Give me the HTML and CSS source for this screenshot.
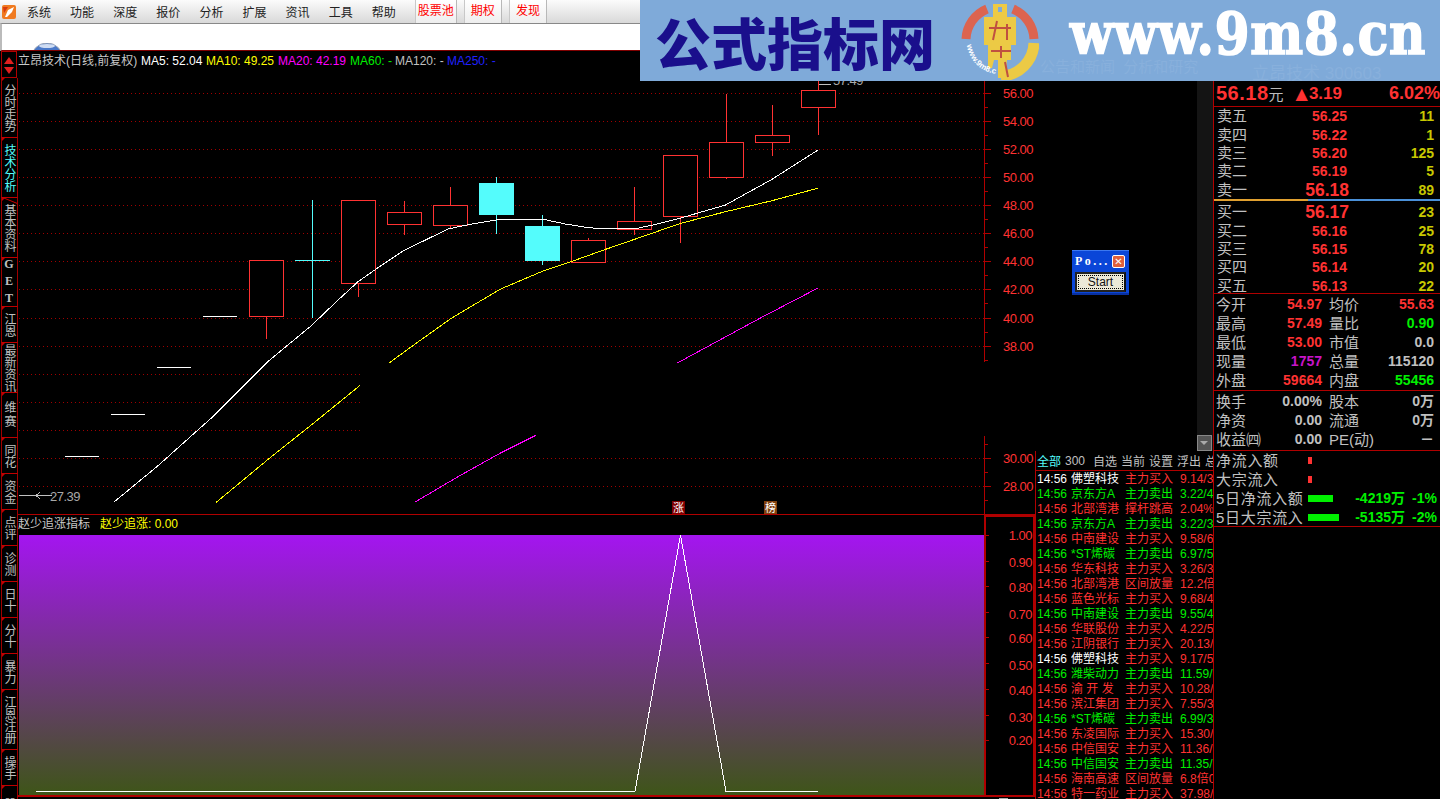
FILE: index.html
```html
<!DOCTYPE html>
<html lang="zh-CN">
<head>
  <meta charset="UTF-8" />
  <title>立昂技术</title>
  <link rel="stylesheet" href="styles.css">
</head>
<body>
  <div class="menubar">
    <svg class="app-logo" width="16" height="16" viewBox="0 0 16 16">
      <rect x="1" y="1" width="14" height="14" rx="2" fill="#f07a20"/>
      <path d="M4 13 L7 6 L13 3 L11 8 L6 13 Z" fill="#fff"/>
      <path d="M2 3 L7 3 L3 9 Z" fill="#d83a10"/>
    </svg>
    <span class="menu-item">系统</span>
    <span class="menu-item">功能</span>
    <span class="menu-item">深度</span>
    <span class="menu-item">报价</span>
    <span class="menu-item">分析</span>
    <span class="menu-item">扩展</span>
    <span class="menu-item">资讯</span>
    <span class="menu-item">工具</span>
    <span class="menu-item">帮助</span>
    <span class="menu-hot menu-hot-first">股票池</span>
    <span class="menu-hot">期权</span>
    <span class="menu-hot">发现</span>
  </div>

  <div class="toolbar">
    <svg width="34" height="7" viewBox="0 0 34 7">
      <circle cx="17" cy="16" r="16" fill="#4a78c8" stroke="#9aa4b4"/>
      <ellipse cx="17" cy="3" rx="8" ry="2" fill="#cfdcf2"/>
    </svg>
  </div>

  <div class="workspace">
    <div class="sidetabs">
      <div class="tab-arrows"><span class="arrow-up"></span><span class="arrow-down"></span></div>
      <div class="tab tab-long">分时走势</div>
      <div class="tab tab-long tab-active">技术分析</div>
      <div class="tab tab-long">基本资料</div>
      <div class="tab tab-get">GET</div>
      <div class="tab">江恩</div>
      <div class="tab tab-tight">最新资讯</div>
      <div class="tab tab-wei">维赛</div>
      <div class="tab">同花</div>
      <div class="tab">资金</div>
      <div class="tab">点评</div>
      <div class="tab">诊测</div>
      <div class="tab">日十</div>
      <div class="tab">分十</div>
      <div class="tab">暴力</div>
      <div class="tab tab-long">江恩注册</div>
      <div class="tab">操手</div>
      <div class="tab">股</div>
    </div>

    <div class="charts">
      <svg class="chart" width="1017" height="464" viewBox="18 51 1017 464">
        <text class="lbl-cn" x="18" y="65">立昂技术(日线,前复权)</text>
        <text class="lbl c-white" x="141" y="65">MA5: 52.04</text>
        <text class="lbl c-yellow" x="206" y="65">MA10: 49.25</text>
        <text class="lbl c-magenta" x="278" y="65">MA20: 42.19</text>
        <text class="lbl c-green" x="350" y="65">MA60: -</text>
        <text class="lbl c-grey" x="395" y="65">MA120: -</text>
        <text class="lbl c-blue" x="447" y="65">MA250: -</text>

        <path class="grid" d="M19 93.5H985M19 121.5H985M19 149.5H985M19 177.5H985M19 205.5H985M19 233.5H985M19 261.5H985M19 289.5H985M19 318.5H985M19 346.5H985M19 374.5H360M19 402.5H360M19 430.5H360M19 458.5H985M19 486.5H985"/>

        <path class="axis" d="M984.5 51V362M984.5 436V515"/>
        <path class="axis" d="M985 93.5h6M985 121.5h6M985 149.5h6M985 177.5h6M985 205.5h6M985 233.5h6M985 261.5h6M985 289.5h6M985 318.5h6M985 346.5h6M985 458.5h6M985 486.5h6"/>
        <path class="axis" d="M985 107.5h3M985 135.5h3M985 163.5h3M985 191.5h3M985 219.5h3M985 247.5h3M985 275.5h3M985 303.5h3M985 332.5h3M985 360.5h3M985 444.5h3M985 472.5h3M985 500.5h3"/>
        <text class="tick" x="1033" y="98">56.00</text>
        <text class="tick" x="1033" y="126">54.00</text>
        <text class="tick" x="1033" y="154">52.00</text>
        <text class="tick" x="1033" y="182">50.00</text>
        <text class="tick" x="1033" y="210">48.00</text>
        <text class="tick" x="1033" y="238">46.00</text>
        <text class="tick" x="1033" y="266">44.00</text>
        <text class="tick" x="1033" y="294">42.00</text>
        <text class="tick" x="1033" y="323">40.00</text>
        <text class="tick" x="1033" y="351">38.00</text>
        <text class="tick" x="1033" y="463">30.00</text>
        <text class="tick" x="1033" y="491">28.00</text>

        <!-- k lines -->
        <path class="doji" d="M19 495.5H52M65 456.5H99M111 414.5H145M157 367.5H191M203 316.5H237"/>
        <path class="wick" d="M266.5 316V339M358.5 283V297M404.5 201V213M404.5 224V235M450.5 187V206M450.5 225V228M588.5 238V241M634.5 187V221M634.5 229V235M680.5 216V243M726.5 94V143M726.5 177V179M772.5 105V136M772.5 142V156M818.5 80V91M818.5 107V135"/>
        <rect class="up" x="249.5" y="260.5" width="34" height="56"/>
        <rect class="up" x="341.5" y="200.5" width="34" height="83"/>
        <rect class="up" x="387.5" y="212.5" width="34" height="12"/>
        <rect class="up" x="433.5" y="205.5" width="34" height="20"/>
        <rect class="up" x="571.5" y="240.5" width="34" height="22"/>
        <rect class="up" x="617.5" y="221.5" width="34" height="8"/>
        <rect class="up" x="663.5" y="155.5" width="34" height="61"/>
        <rect class="up" x="709.5" y="142.5" width="34" height="35"/>
        <rect class="up" x="755.5" y="135.5" width="34" height="7"/>
        <rect class="up" x="801.5" y="90.5" width="34" height="17"/>
        <path class="cyan-line" d="M312.5 200V318M295 260.5H330M496.5 177V234M542.5 215V265"/>
        <rect class="down" x="479" y="183" width="35" height="32"/>
        <rect class="down" x="525" y="226" width="35" height="35"/>

        <!-- moving averages -->
        <polyline class="ma5" points="113.7,502.3 158,465.7 214.7,415 244.7,385 269.7,360 311.3,325.7 336.3,301.7 358,281.7 374.7,270 403,251 448,229 468,224.7 496,220 518,219 542,219 565.4,224 586,227.3 600,228.7 634,229 651.5,225.3 680.8,218 725.5,205 772,179.3 818.5,149.7"/>
        <polyline class="ma10" points="216.3,502.3 271.3,456.7 311.3,425 359.7,385.7"/>
        <polyline class="ma10" points="388.7,363.3 414.7,344.3 451.3,318.3 500,289.3 542.4,271.3 571,261.7 605.7,249.3 680.8,223.3 725.5,211.7 772,200.7 817.5,188.3"/>
        <polyline class="ma20" points="414.7,502.3 458,476.7 500,453.3 536,435.3"/>
        <polyline class="ma20" points="676.7,363.3 761.7,317.3 817.5,288.3"/>

        <path class="note" d="M19 495.5H52M36 495.5l4 -3M36 495.5l4 3"/>
        <text class="note-text" x="50" y="501">27.39</text>
        <path class="note" d="M819 84H831"/>
        <text class="note-text" x="833" y="85">57.49</text>

        <rect class="tag-red" x="672" y="501" width="13" height="13"/>
        <text class="tag-text" x="678.5" y="512">涨</text>
        <rect class="tag-brown" x="764" y="501" width="13" height="13"/>
        <text class="tag-text" x="770.5" y="512">榜</text>

        <path class="frame" d="M18 514.5H1035"/>
      </svg>

      <svg class="chart" width="1017" height="284" viewBox="18 515 1017 284">
        <defs>
          <linearGradient id="volFill" x1="0" y1="0" x2="0" y2="1">
            <stop offset="0" stop-color="#a415f0"/>
            <stop offset="1" stop-color="#3e5518"/>
          </linearGradient>
        </defs>
        <text class="lbl-cn" x="18" y="528">赵少追涨指标</text>
        <text class="lbl-cn c-yellow" x="100" y="528">赵少追涨: 0.00</text>
        <rect x="19" y="535" width="965" height="260" fill="url(#volFill)"/>
        <polyline class="spike" points="36,791.5 635,791.5 680.5,535 726,791.5 818,791.5"/>
        <path class="frame-thick" d="M18 796H985M985 516H1034V796H985Z"/>
        <path class="axis" d="M985 535.5h4M985 561.5h4M985 586.5h4M985 612.5h4M985 637.5h4M985 663.5h4M985 689.5h4M985 715.5h4M985 740.5h4"/>
        <text class="tick" x="1032" y="540">1.00</text>
        <text class="tick" x="1032" y="567">0.90</text>
        <text class="tick" x="1032" y="592">0.80</text>
        <text class="tick" x="1032" y="619">0.70</text>
        <text class="tick" x="1032" y="643">0.60</text>
        <text class="tick" x="1032" y="670">0.50</text>
        <text class="tick" x="1032" y="695">0.40</text>
        <text class="tick" x="1032" y="722">0.30</text>
        <text class="tick" x="1032" y="745">0.20</text>
        <rect class="stub" x="999" y="798" width="9" height="1"/>
      </svg>
    </div>

    <div class="middle">
      <div class="middle-top">
        <div class="scrollbar"><span class="scroll-btn"></span></div>
      </div>
      <div class="ticks">
        <div class="tick-tabs">
          <span class="c-cyan">全部</span><span>300</span><span>自选</span><span>当前</span><span>设置</span><span>浮出</span><span>总</span>
        </div>
        <div class="tick-row c-white"><span>14:56</span><span>佛塑科技</span><span class="c-red">主力买入</span><span class="c-red">9.14/3</span></div>
        <div class="tick-row c-green"><span>14:56</span><span>京东方A</span><span>主力卖出</span><span>3.22/4</span></div>
        <div class="tick-row c-red"><span>14:56</span><span>北部湾港</span><span>撑杆跳高</span><span>2.04%</span></div>
        <div class="tick-row c-green"><span>14:56</span><span>京东方A</span><span>主力卖出</span><span>3.22/3</span></div>
        <div class="tick-row c-red"><span>14:56</span><span>中南建设</span><span>主力买入</span><span>9.58/6</span></div>
        <div class="tick-row c-green"><span>14:56</span><span>*ST烯碳</span><span>主力卖出</span><span>6.97/5</span></div>
        <div class="tick-row c-red"><span>14:56</span><span>华东科技</span><span>主力买入</span><span>3.26/3</span></div>
        <div class="tick-row c-red"><span>14:56</span><span>北部湾港</span><span>区间放量</span><span>12.2倍</span></div>
        <div class="tick-row c-red"><span>14:56</span><span>蓝色光标</span><span>主力买入</span><span>9.68/4</span></div>
        <div class="tick-row c-green"><span>14:56</span><span>中南建设</span><span>主力卖出</span><span>9.55/4</span></div>
        <div class="tick-row c-red"><span>14:56</span><span>华联股份</span><span>主力买入</span><span>4.22/5</span></div>
        <div class="tick-row c-red"><span>14:56</span><span>江阴银行</span><span>主力买入</span><span>20.13/</span></div>
        <div class="tick-row c-white"><span>14:56</span><span>佛塑科技</span><span class="c-red">主力买入</span><span class="c-red">9.17/5</span></div>
        <div class="tick-row c-green"><span>14:56</span><span>潍柴动力</span><span>主力卖出</span><span>11.59/</span></div>
        <div class="tick-row c-red"><span>14:56</span><span>渝 开 发</span><span>主力买入</span><span>10.28/</span></div>
        <div class="tick-row c-red"><span>14:56</span><span>滨江集团</span><span>主力买入</span><span>7.55/3</span></div>
        <div class="tick-row c-green"><span>14:56</span><span>*ST烯碳</span><span>主力卖出</span><span>6.99/3</span></div>
        <div class="tick-row c-red"><span>14:56</span><span>东凌国际</span><span>主力买入</span><span>15.30/</span></div>
        <div class="tick-row c-red"><span>14:56</span><span>中信国安</span><span>主力买入</span><span>11.36/</span></div>
        <div class="tick-row c-green"><span>14:56</span><span>中信国安</span><span>主力卖出</span><span>11.35/</span></div>
        <div class="tick-row c-red"><span>14:56</span><span>海南高速</span><span>区间放量</span><span>6.8倍0</span></div>
        <div class="tick-row c-red"><span>14:56</span><span>特一药业</span><span>主力买入</span><span>37.98/</span></div>
      </div>
    </div>

    <div class="quote">
      <div class="quote-head">
        <span class="last">56.18</span><span class="yuan">元</span>
        <span class="change"><span class="tri">▲</span>3.19</span>
        <span class="percent">6.02%</span>
      </div>

      <div class="book book-sell">
        <div class="book-row"><span>卖五</span><b>56.25</b><i>11</i></div>
        <div class="book-row"><span>卖四</span><b>56.22</b><i>1</i></div>
        <div class="book-row"><span>卖三</span><b>56.20</b><i>125</i></div>
        <div class="book-row"><span>卖二</span><b>56.19</b><i>5</i></div>
        <div class="book-row"><span>卖一</span><b class="best">56.18</b><i>89</i></div>
      </div>
      <div class="book-split"></div>
      <div class="book book-buy">
        <div class="book-row"><span>买一</span><b class="best">56.17</b><i>23</i></div>
        <div class="book-row"><span>买二</span><b>56.16</b><i>25</i></div>
        <div class="book-row"><span>买三</span><b>56.15</b><i>78</i></div>
        <div class="book-row"><span>买四</span><b>56.14</b><i>20</i></div>
        <div class="book-row"><span>买五</span><b>56.13</b><i>22</i></div>
      </div>

      <div class="stats">
        <div class="stat-row"><span>今开</span><b class="c-red">54.97</b><span>均价</span><b class="c-red">55.63</b></div>
        <div class="stat-row"><span>最高</span><b class="c-red">57.49</b><span>量比</span><b class="c-green">0.90</b></div>
        <div class="stat-row"><span>最低</span><b class="c-red">53.00</b><span>市值</span><b>0.0</b></div>
        <div class="stat-row"><span>现量</span><b class="c-purple">1757</b><span>总量</span><b>115120</b></div>
        <div class="stat-row"><span>外盘</span><b class="c-red">59664</b><span>内盘</span><b class="c-green">55456</b></div>
      </div>
      <div class="stats stats-short">
        <div class="stat-row"><span>换手</span><b>0.00%</b><span>股本</span><b>0万</b></div>
        <div class="stat-row"><span>净资</span><b>0.00</b><span>流通</span><b>0万</b></div>
        <div class="stat-row"><span class="nowrap">收益㈣</span><b>0.00</b><span class="nowrap">PE(动)</span><b>－</b></div>
      </div>

      <div class="flows">
        <div class="flow-row"><span>净流入额</span><div><em class="bar-red" style="width:4px"></em></div></div>
        <div class="flow-row"><span>大宗流入</span><div><em class="bar-red" style="width:4px"></em></div></div>
        <div class="flow-row"><span>5日净流入额</span><div><em class="bar-green" style="width:25px"></em></div><b>-4219万</b><b>-1%</b></div>
        <div class="flow-row"><span>5日大宗流入</span><div><em class="bar-green" style="width:31px"></em></div><b>-5135万</b><b>-2%</b></div>
      </div>
    </div>
  </div>

  <!-- floating window -->
  <div class="popup">
    <div class="popup-title"><span>Po...</span><span class="popup-close">✕</span></div>
    <div class="popup-btn"><span>Start</span></div>
  </div>

  <!-- watermark over the top right -->
  <div class="banner">
    <span class="banner-title">公式指标网</span>
    <svg class="banner-logo" width="78" height="78" viewBox="0 0 78 78">
      <path class="ring-red" d="M5 37 A34 34 0 0 1 26 7"/>
      <path class="ring-red" d="M52 7 A34 34 0 0 1 73 37"/>
      <path class="ring-gold" d="M73 41 A34 34 0 0 1 40 74"/>
      <path class="logo-gold" d="M32 2H46V15H55V43H50V58H46L44 76H37V58H33L31 66H27V43H23V15H32Z"/>
      <rect class="logo-cut" x="37" y="5" width="4" height="5"/>
      <path class="logo-mark" d="M28 26H50M36 19L32 38M46 22V38M30 49H50M40 44V56M44 60L47 75"/>
      <path id="logoText" class="logo-none" d="M6 43 A33 33 0 0 0 36 72"/>
      <text class="logo-text"><textPath href="#logoText">www.9m8.cn</textPath></text>
    </svg>
    <span class="banner-url">www.9m8.cn</span>
    <span class="ghost ghost-news">公告和新闻&nbsp;&nbsp;分析和研究</span>
    <span class="ghost ghost-code">立昂技术 300603</span>
  </div>
</body>
</html>
```

FILE: styles.css
```css
* {
  box-sizing: border-box;
  margin: 0;
  padding: 0;
}

body {
  width: 1440px;
  height: 799px;
  overflow: hidden;
  position: relative;
  background: #000;
  font-family: "Liberation Sans", "Noto Sans CJK SC", sans-serif;
  color: #c0c0c0;
}

b, i, em {
  font-style: normal;
}

.c-white { color: #fff; fill: #fff; }
.c-yellow { color: #ff0; fill: #ff0; }
.c-magenta { color: #f0f; fill: #f0f; }
.c-green { color: #00f000; fill: #00f000; }
.c-grey { color: #c0c0c0; fill: #c0c0c0; }
.c-blue { color: #00f; fill: #2020ff; }
.c-red { color: #ff3232; fill: #ff3232; }
.c-cyan { color: #54fcfc; }
.c-purple { color: #c814c8; }

/* menu */
.menubar {
  height: 23px;
  display: flex;
  align-items: center;
  background: linear-gradient(#fbfbfb, #d9d9d9);
  font-size: 12px;
  color: #222;
}

.app-logo {
  margin-left: 1px;
  margin-right: 10px;
  flex: none;
}

.menu-item {
  width: 43.1px;
  flex: none;
}

.menu-hot {
  height: 23px;
  line-height: 23px;
  padding: 0 6px;
  margin-right: 7px;
  color: #f00;
  font-size: 12px;
  background: linear-gradient(#fff, #eee);
  border-left: 1px solid #c8c8c8;
  border-right: 1px solid #b8b8b8;
}

.menu-hot-first {
  padding: 0 2px;
}

.toolbar {
  height: 28px;
  padding-left: 28px;
  display: flex;
  align-items: flex-end;
  background: #fff;
  border-top: 1px solid #888;
  border-bottom: 1px solid #800000;
  border-left: 2px solid #bbb;
}

.workspace {
  height: 748px;
  display: flex;
}

/* left tabs */
.sidetabs {
  width: 18px;
  flex: none;
  font-size: 12px;
  overflow: hidden;
}

.tab-arrows {
  height: 27px;
  margin-left: 1px;
  margin-right: 1px;
  border: 1px solid #b00000;
  display: flex;
  flex-direction: column;
  align-items: center;
  justify-content: space-around;
  padding: 3px 0 1px;
}

.arrow-up {
  border: 5.5px solid transparent;
  border-top: 0;
  border-bottom: 7px solid #e02020;
}

.arrow-down {
  border: 5.5px solid transparent;
  border-bottom: 0;
  border-top: 7px solid #e02020;
}

.tab {
  position: relative;
  width: 17px;
  height: 36px;
  margin-left: 1px;
  padding-right: 2px;
  border-left: 1px solid #a00000;
  border-right: 1px solid #a00000;
  border-bottom: 1px solid #c00000;
  display: flex;
  align-items: center;
  justify-content: center;
  writing-mode: vertical-rl;
  text-orientation: upright;
  line-height: 13px;
  color: #c0c0c0;
  white-space: nowrap;
}

.tab::before {
  content: "";
  position: absolute;
  left: 0;
  top: 0;
  border-top: 3px solid #c00000;
  border-right: 3px solid transparent;
}

.tab-long { height: 60px; }
.tab-get { height: 49px; font-weight: bold; font-family: "Liberation Serif", serif; letter-spacing: 3px; }
.tab-tight { height: 50px; }
.tab-wei { height: 45px; letter-spacing: 2px; }
.tab-active { color: #54fcfc; }

.tab-active::after {
  content: "";
  position: absolute;
  left: -1px;
  bottom: -4px;
  width: 18px;
  height: 1px;
  background: #d00000;
  transform: rotate(22deg);
}

/* charts */
.charts {
  width: 1017px;
  flex: none;
}

.chart {
  display: block;
  shape-rendering: crispEdges;
}

.lbl-cn {
  font-size: 12px;
  fill: #c8c8c8;
}

.lbl-cn.c-yellow { fill: #ff0; }

.lbl {
  font-size: 12px;
}

.tick {
  font-size: 13px;
  letter-spacing: -0.5px;
  fill: #ff3232;
  text-anchor: end;
}

.grid {
  stroke: #a00000;
  stroke-dasharray: 1 3;
  fill: none;
}

.axis {
  stroke: #b00000;
  fill: none;
}

.frame {
  stroke: #b00000;
}

.frame-thick {
  stroke: #b00000;
  stroke-width: 2;
  fill: none;
}

.doji {
  stroke: #fff;
}

.wick {
  stroke: #ff3232;
}

.up {
  fill: #000;
  stroke: #ff3232;
}

.down {
  fill: #54fcfc;
}

.cyan-line {
  stroke: #54fcfc;
}

.ma5, .ma10, .ma20, .spike {
  fill: none;
}

.ma5, .spike { stroke: #fff; }
.ma10 { stroke: #ff0; }
.ma20 { stroke: #f0f; }

.note {
  stroke: #c0c0c0;
}

.note-text {
  font-size: 13px;
  letter-spacing: -0.5px;
  fill: #a8a8a8;
}

.tag-red { fill: #800000; }
.tag-brown { fill: #80400f; }

.tag-text {
  font-size: 11px;
  fill: #fff;
  text-anchor: middle;
}

.stub {
  fill: #aaa;
}

/* middle column */
.middle {
  width: 178px;
  flex: none;
}

.middle-top {
  height: 400px;
  display: flex;
  justify-content: flex-end;
}

.scrollbar {
  width: 16px;
  background: #141414;
  display: flex;
  flex-direction: column;
  justify-content: flex-end;
}

.scroll-btn {
  position: relative;
  height: 16px;
  width: 15px;
  background: #555;
  border: 1px solid #888;
}

.scroll-btn::after {
  content: "";
  position: absolute;
  left: 2px;
  top: 5px;
  border: 4px solid transparent;
  border-bottom: 0;
  border-top: 4px solid #aaa;
}

.ticks {
  height: 348px;
  overflow: hidden;
  border-left: 1px solid #b00000;
  font-size: 12px;
}

.tick-tabs {
  height: 20px;
  margin-bottom: 1px;
  display: flex;
  align-items: center;
  gap: 4px;
  padding-left: 1px;
  border-bottom: 1px solid #b00000;
  white-space: nowrap;
  overflow: hidden;
}

.tick-tabs span {
  width: 24px;
  flex: none;
}

.tick-row {
  height: 15px;
  line-height: 15px;
  display: grid;
  grid-template-columns: 34px 54px 55px 34px;
  padding-left: 1px;
  white-space: pre;
  overflow: hidden;
}

.tick-row span {
  overflow: hidden;
}

/* right quote panel */
.quote {
  width: 227px;
  flex: none;
  padding-top: 30px;
  border-left: 1px solid #b00000;
  font-size: 15px;
}

.quote-head {
  height: 26px;
  position: relative;
  display: flex;
  align-items: center;
  padding-left: 2px;
  border-bottom: 1px solid #b00000;
  color: #ff3232;
  font-weight: bold;
  white-space: nowrap;
}

.last {
  font-size: 20px;
  letter-spacing: 0.5px;
}

.yuan {
  font-size: 15px;
  font-weight: normal;
  color: #bbb;
}

.change {
  margin-left: 12px;
  font-size: 17px;
  line-height: 20px;
}

.tri {
  font-size: 16px;
  line-height: 0;
  font-family: "DejaVu Sans", sans-serif;
  font-weight: normal;
  letter-spacing: 1px;
}

.percent {
  position: absolute;
  left: 175px;
  font-size: 18px;
}

.book {
  display: grid;
  grid-auto-rows: 18.4px;
}

.book-sell {
  height: 92px;
}

.book-buy {
  height: 92px;
  padding-top: 2px;
}

.book-row {
  display: grid;
  grid-template-columns: 30px 100px 87px;
  padding-left: 3px;
  align-items: center;
  line-height: 18px;
}

.book-row b {
  font-size: 14px;
  color: #ff3232;
  text-align: right;
}

.book-row b.best {
  font-size: 17.5px;
  margin-right: -2px;
}

.book-row i {
  font-size: 14px;
  font-weight: bold;
  color: #c8c800;
  text-align: right;
}

.book-split {
  height: 2px;
  background: linear-gradient(to right, #e0a030 94px, #4a90d8 94px);
}

.stats {
  height: 97px;
  padding: 1px 0 0 2px;
  border-top: 1px solid #b00000;
}

.stats-short {
  height: 60px;
}

.stat-row {
  height: 19px;
  line-height: 19px;
  display: grid;
  grid-template-columns: 30px 76px 37px 75px;
}

.stat-row b {
  font-size: 14px;
  text-align: right;
  white-space: nowrap;
}

.stat-row span:nth-of-type(2) {
  padding-left: 7px;
}

.nowrap {
  white-space: nowrap;
}

.flows {
  height: 77px;
  padding-left: 2px;
  border-top: 1px solid #b00000;
  border-bottom: 1px solid #b00000;
}

.flow-row {
  height: 19px;
  line-height: 19px;
  display: grid;
  grid-template-columns: 92px 45px 52px 32px;
  align-items: center;
  white-space: nowrap;
  letter-spacing: 0.7px;
}

.flow-row em {
  display: block;
  height: 7px;
}

.flow-row b {
  font-size: 14px;
  letter-spacing: 0;
  color: #00f000;
  text-align: right;
}

.bar-red { background: #ff3232; }
.bar-green { background: #00f000; }

/* popup */
.popup {
  position: absolute;
  left: 1072px;
  top: 250px;
  width: 57px;
  height: 45px;
  padding: 3px;
  background: #0a46d8;
  border-top: 1px solid #3c78f0;
  border-bottom: 2px solid #0830a0;
}

.popup-title {
  height: 15px;
  display: flex;
  justify-content: space-between;
  align-items: center;
  font-family: "Liberation Serif", serif;
  font-size: 12px;
  font-weight: bold;
  letter-spacing: 2.5px;
  color: #fff;
}

.popup-close {
  width: 13px;
  height: 13px;
  margin-right: 1px;
  border-radius: 2px;
  border: 1px solid #fff;
  background: #e0603c;
  font-family: "DejaVu Sans", sans-serif;
  font-size: 10px;
  line-height: 11px;
  letter-spacing: 0;
  text-align: center;
}

.popup-btn {
  height: 20px;
  margin-top: 3px;
  background: #ece9d8;
  border: 2px solid #222;
  border-right-color: #111;
  padding: 1px;
  font-size: 12px;
  line-height: 12px;
  color: #111;
  text-align: center;
}

.popup-btn span {
  display: block;
  height: 14px;
  border: 1px dotted #000;
}

/* banner */
.banner {
  position: absolute;
  left: 640px;
  top: 0;
  width: 800px;
  height: 81px;
  padding-left: 15px;
  display: flex;
  align-items: center;
  background: #7faad9;
  overflow: hidden;
}

.banner-title {
  width: 306px;
  flex: none;
  font-family: "Noto Sans CJK SC", sans-serif;
  font-size: 56px;
  font-weight: 900;
  line-height: 76px;
  color: #1a0f8c;
  white-space: nowrap;
}

.banner-logo {
  flex: none;
}

.banner-url {
  margin-left: 31px;
  font-family: "DejaVu Serif", serif;
  font-size: 50px;
  font-weight: bold;
  line-height: 44px;
  letter-spacing: 0.8px;
  color: #fff;
  -webkit-text-stroke: 1.5px #fff;
  white-space: nowrap;
  transform: translateY(-7px) scaleY(1.15);
}

.ring-red, .ring-gold, .logo-none {
  fill: none;
}

.ring-red {
  stroke: #dc6450;
  stroke-width: 9;
}

.ring-gold {
  stroke: #ecca45;
  stroke-width: 11;
}

.logo-gold {
  fill: #ecca45;
}

.logo-cut {
  fill: #7faad9;
}

.logo-mark {
  fill: none;
  stroke: #c05040;
  stroke-width: 2;
}

.logo-text {
  font-size: 8px;
  font-weight: bold;
  fill: #fff;
}

.ghost {
  position: absolute;
  color: #88b0dc;
  white-space: nowrap;
}

.ghost-news {
  left: 400px;
  top: 55px;
  font-size: 15px;
}

.ghost-code {
  left: 612px;
  top: 59px;
  font-size: 17px;
}
```
